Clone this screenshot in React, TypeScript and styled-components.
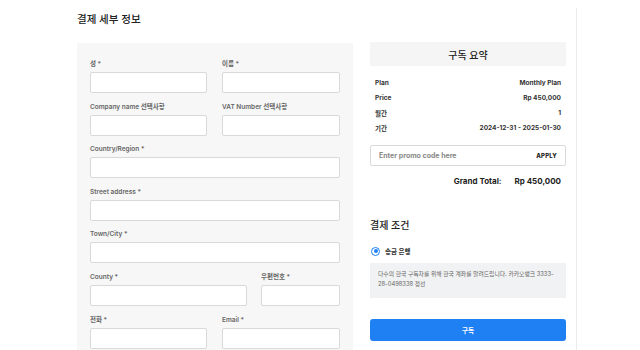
import React from "react";
import styled, { createGlobalStyle } from "styled-components";

const Global = createGlobalStyle`
  html, body { margin: 0; padding: 0; background: #fff; }
  body { font-family: Inter, "Noto Sans CJK KR", sans-serif; color: #222; overflow: hidden; }
  * { box-sizing: border-box; }
`;

const Page = styled.div`
  display: flex;
  height: 350px;
  padding-left: 77px;
  overflow: hidden;
`;

const LeftCol = styled.div`
  width: 276px;
  display: flex;
  flex-direction: column;
`;

const Title = styled.h1`
  margin: 0;
  flex-shrink: 0;
  height: 43px;
  padding-top: 13px;
  font-size: 10.5px;
  line-height: 14px;
  font-weight: 500;
  color: #222;
`;

const Panel = styled.div`
  flex: 1 0 auto;
  background: #f7f7f7;
  padding: 16px 13px 0;
`;

const Row = styled.div<{ $cols: string; $gap?: number }>`
  display: grid;
  grid-template-columns: ${(p) => p.$cols};
  column-gap: ${(p) => p.$gap ?? 15}px;
  margin-bottom: 8.6px;
`;

const Field = styled.div`
  display: flex;
  flex-direction: column;
`;

const Label = styled.label`
  font-size: 6.5px;
  line-height: 10px;
  font-weight: 600;
  color: #666;
  margin-bottom: 3px;
`;

const Input = styled.div`
  height: 21px;
  background: #fff;
  border: 1px solid #d9d9d9;
  border-radius: 2px;
`;

const RightCol = styled.div`
  width: 196px;
  margin-left: 17px;
  padding-top: 42px;
  display: flex;
  flex-direction: column;
`;

const SummaryHead = styled.div`
  height: 24px;
  background: #f5f5f5;
  display: flex;
  align-items: center;
  justify-content: center;
  font-size: 10px;
  font-weight: 500;
  color: #222;
`;

const SummaryList = styled.div`
  padding: 9px 5px 0;
`;

const SummaryRow = styled.div`
  display: flex;
  justify-content: space-between;
  height: 15px;
  align-items: center;
  font-size: 6.5px;
  font-weight: 700;
  color: #333;
`;

const Promo = styled.div`
  margin-top: 10px;
  height: 21px;
  border: 1px solid #d9d9d9;
  border-radius: 2px;
  display: flex;
  align-items: center;
  justify-content: space-between;
  padding: 0 8px;
`;

const PromoPlaceholder = styled.span`
  font-size: 7px;
  font-weight: 700;
  color: #888;
`;

const ApplyButton = styled.span`
  font-size: 6px;
  font-weight: 800;
  color: #222;
  letter-spacing: 0.2px;
`;

const GrandTotal = styled.div`
  margin-top: 9px;
  padding-right: 5px;
  display: flex;
  justify-content: flex-end;
  gap: 13px;
  font-size: 8px;
  font-weight: 700;
  line-height: 12px;
  color: #222;
`;

const SectionTitle = styled.h2`
  margin: 31px 0 0;
  font-size: 10px;
  line-height: 14px;
  font-weight: 500;
  color: #222;
`;

const RadioRow = styled.div`
  margin-top: 14px;
  display: flex;
  align-items: center;
  gap: 5px;
  padding-left: 1px;
`;

const Radio = styled.span`
  width: 9px;
  height: 9px;
  border-radius: 50%;
  border: 1.5px solid #1f80f4;
  display: flex;
  align-items: center;
  justify-content: center;
  &::after {
    content: "";
    width: 4px;
    height: 4px;
    border-radius: 50%;
    background: #1f80f4;
  }
`;

const RadioLabel = styled.span`
  font-size: 6.5px;
  font-weight: 600;
  color: #333;
`;

const Notice = styled.div`
  margin-top: 7px;
  height: 35px;
  background: #f1f2f3;
  padding: 6px 8px;
  font-size: 5.8px;
  line-height: 10px;
  color: #666;
`;

const SubmitButton = styled.button`
  margin-top: 21px;
  height: 22px;
  border: none;
  border-radius: 3px;
  background: #1f80f4;
  color: #fff;
  font-family: inherit;
  font-size: 6.5px;
  font-weight: 600;
`;

const Divider = styled.div`
  margin-left: 10px;
  margin-top: 8px;
  border-left: 1px solid #ececec;
`;

const summary = [
  ["Plan", "Monthly Plan"],
  ["Price", "Rp 450,000"],
  ["월간", "1"],
  ["기간", "2024-12-31 - 2025-01-30"],
];

export default function App() {
  return (
    <>
      <Global />
      <Page>
        <LeftCol>
          <Title>결제 세부 정보</Title>
          <Panel>
            <Row $cols="117px 118px">
              <Field><Label>성 *</Label><Input /></Field>
              <Field><Label>이름 *</Label><Input /></Field>
            </Row>
            <Row $cols="117px 118px">
              <Field><Label>Company name 선택사항</Label><Input /></Field>
              <Field><Label>VAT Number 선택사항</Label><Input /></Field>
            </Row>
            <Row $cols="1fr">
              <Field><Label>Country/Region *</Label><Input /></Field>
            </Row>
            <Row $cols="1fr">
              <Field><Label>Street address *</Label><Input /></Field>
            </Row>
            <Row $cols="1fr">
              <Field><Label>Town/City *</Label><Input /></Field>
            </Row>
            <Row $cols="157px 79px" $gap={14}>
              <Field><Label>County *</Label><Input /></Field>
              <Field><Label>우편번호 *</Label><Input /></Field>
            </Row>
            <Row $cols="117px 118px">
              <Field><Label>전화 *</Label><Input /></Field>
              <Field><Label>Email *</Label><Input /></Field>
            </Row>
          </Panel>
        </LeftCol>
        <RightCol>
          <SummaryHead>구독 요약</SummaryHead>
          <SummaryList>
            {summary.map(([k, v]) => (
              <SummaryRow key={k}>
                <span>{k}</span>
                <span>{v}</span>
              </SummaryRow>
            ))}
          </SummaryList>
          <Promo>
            <PromoPlaceholder>Enter promo code here</PromoPlaceholder>
            <ApplyButton>APPLY</ApplyButton>
          </Promo>
          <GrandTotal>
            <span>Grand Total:</span>
            <span>Rp 450,000</span>
          </GrandTotal>
          <SectionTitle>결제 조건</SectionTitle>
          <RadioRow>
            <Radio />
            <RadioLabel>송금 은행</RadioLabel>
          </RadioRow>
          <Notice>
            다수의 한국 구독자를 위해 한국 계좌를 알려드립니다. 카카오뱅크 3333-28-0498338 정선
          </Notice>
          <SubmitButton>구독</SubmitButton>
        </RightCol>
        <Divider />
      </Page>
    </>
  );
}
